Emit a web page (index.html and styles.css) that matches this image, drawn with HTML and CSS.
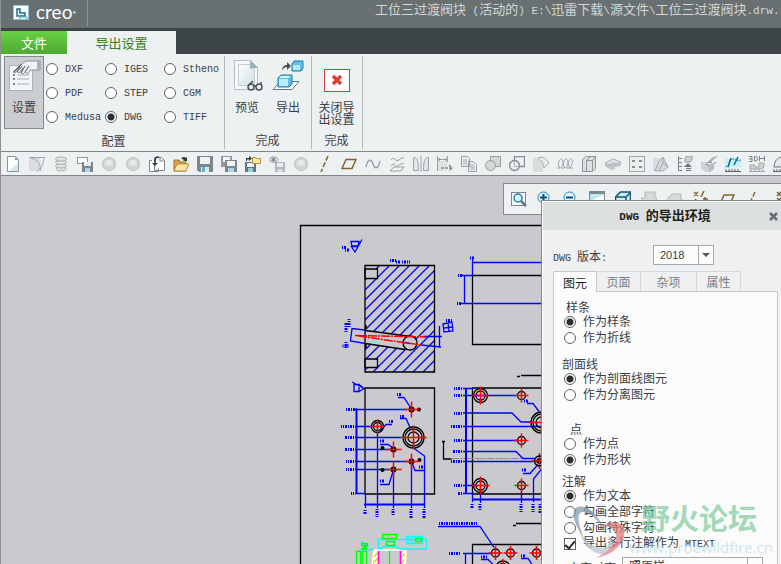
FILE: index.html
```html
<!DOCTYPE html>
<html lang="zh-CN">
<head>
    <meta charset="UTF-8">
    <meta name="viewport" content="width=device-width, initial-scale=1.0">
    <title>Creo</title>
    <link rel="stylesheet" href="styles.css">
</head>
<body>
<div class="app">
    <header class="titlebar">
        <div class="brand">
            <svg width="16" height="16" viewBox="0 0 16 16">
                <rect x="0.5" y="0.5" width="15" height="14" fill="#f4fbfd" stroke="#8fc3d6"/>
                <path d="M4 4h3v4h5v3H4z" fill="none" stroke="#1c6d8c" stroke-width="1.5"/>
                <path d="M7 14v-2h7v2" fill="none" stroke="#5fa9c4"/>
            </svg>
            <span class="brand-name">creo</span><span class="brand-mark">●</span>
        </div>
        <div class="window-title">工位三过渡阀块<span class="latin"> (</span>活动的<span class="latin">) E:\</span>迅雷下载<span class="latin">\</span>源文件<span class="latin">\</span>工位三过渡阀块<span class="latin">.drw.</span></div>
    </header>
    <nav class="ribbon-tabs">
        <button class="file-tab">文件</button>
        <button class="ribbon-tab">导出设置</button>
    </nav>
    <section class="ribbon">
        <div class="group group-config">
            <div class="group-body">
                <button class="tool tool-active">
                    <svg width="34" height="34" viewBox="0 0 34 34">
                        <rect x="2.5" y="7.5" width="23" height="25" fill="#f3f7f9" stroke="#a9b3b8"/>
                        <path d="M6 21h2M6 17h2M6 26h2" stroke="#7b858a" stroke-width="2"/>
                        <path d="M11 17h11M10 21h12M10 26h12" stroke="#a3adb2"/>
                        <path d="M6 14l7-7 6-4h14v9H23l-2 4-3-2-2 2-2-1 2-5-4 5-2-1 3-5-5 6z" fill="#eef2f4" stroke="#8a959a"/>
                        <path d="M7 14l8-8M10 14l5-6M14 15l4-7M18 14l4-6" stroke="#4d575c" fill="none"/>
                        <rect x="30" y="3" width="3" height="10" fill="#9fb4be"/>
                    </svg>
                    <span>设置</span>
                </button>
                <div class="formats">
                    <label><input type="radio" name="format">DXF</label>
                    <label><input type="radio" name="format">IGES</label>
                    <label><input type="radio" name="format">Stheno</label>
                    <label><input type="radio" name="format">PDF</label>
                    <label><input type="radio" name="format">STEP</label>
                    <label><input type="radio" name="format">CGM</label>
                    <label><input type="radio" name="format">Medusa</label>
                    <label><input type="radio" name="format" checked>DWG</label>
                    <label><input type="radio" name="format">TIFF</label>
                </div>
            </div>
            <div class="group-name">配置</div>
        </div>
        <div class="group">
            <div class="group-body">
                <button class="tool">
                    <svg width="34" height="34" viewBox="0 0 34 34">
                        <defs>
                            <linearGradient id="paper" x1="0" y1="0" x2="1" y2="1"><stop offset="0" stop-color="#fff"/><stop offset="1" stop-color="#cfdde3"/></linearGradient>
                        </defs>
                        <path d="M4.500 2.500h16l7 7v22h-23z" fill="#f7fafb" stroke="#b6c0c5"/>
                        <path d="M8.500 6.500h12v4h4v17h-16z" fill="url(#paper)" stroke="#c2ccd1"/>
                        <path d="M20.500 2.500v7h7z" fill="#8fb5c4" stroke="#a3b4bb"/>
                        <g fill="#e4eaed" stroke="#4a5358" stroke-width="1.500"><circle cx="21" cy="29" r="3"/><circle cx="29" cy="29" r="3"/><path d="M19 27l4-4M31 27v-3M24 28h2" fill="none"/></g>
                    </svg>
                    <span>预览</span>
                </button>
                <button class="tool">
                    <svg width="34" height="34" viewBox="0 0 34 34">
                        <path d="M2 31.500l7-8h19l-7 8z" fill="#fff" stroke="#69777d"/>
                        <path d="M7 20l3-3h11v9l-3 3H7z" fill="#62bfe2" stroke="#1680ad"/>
                        <path d="M8 21h9v7H8z" fill="#b5edfb"/>
                        <path d="M8 20l2-2h10l-3 2z" fill="#dcf7fd"/>
                        <path d="M21 6l2-3h9v7l-2 3h-9z" fill="#62bfe2" stroke="#1680ad"/>
                        <path d="M22 7h7v5h-7z" fill="#b5edfb"/>
                        <path d="M11 13c0-5 3-6 5-6V4l4 4-4 4V9c-2 0-4 1-5 4z" fill="#474f53"/>
                    </svg>
                    <span>导出</span>
                </button>
            </div>
            <div class="group-name">完成</div>
        </div>
        <div class="group">
            <div class="group-body">
                <button class="tool tool-close">
                    <svg width="34" height="34" viewBox="0 0 34 34">
                        <rect x="4.500" y="11.500" width="25" height="22" fill="#fff" stroke="#d33b3b"/>
                        <path d="M13 18l8 8M21 18l-8 8" stroke="#e23d3a" stroke-width="3.500"/>
                    </svg>
                    <span>关闭导<br>出设置</span>
                </button>
            </div>
            <div class="group-name">完成</div>
        </div>
    </section>
    <div class="toolbar">
        <button><svg viewBox="0 0 16 16"><path d="M2.500 0.500h8l3 3v12h-11z" fill="#fff" stroke="#8799a1"/><path d="M10 1v3h3z" fill="#6f99ab"/><path d="M4 15h9V7z" fill="#d5e6ec"/></svg></button>
        <button><svg viewBox="0 0 16 16"><path d="M0 1h10c2 5 2 10 1 14H0z" fill="#d9dddf"/><path d="M0 1.500h16M15 1c0 7-3 12-7 14M2 2c6 1 9 5 10 13" fill="none" stroke="#a3a8aa"/></svg></button>
        <button><svg viewBox="0 0 16 16"><g fill="#e2e5e6" stroke="#a9aeb0"><ellipse cx="8" cy="13" rx="5" ry="2"/><ellipse cx="8" cy="10" rx="5.500" ry="2"/><ellipse cx="8" cy="6.500" rx="5.500" ry="2"/><ellipse cx="8" cy="3" rx="5.500" ry="2"/></g></svg></button>
        <button><svg viewBox="0 0 16 16"><rect x="0.500" y="1.500" width="10" height="6" fill="#fff" stroke="#8d9699"/><path d="M5 6h11v10H5z" fill="#7d878b"/><path d="M7 6h7v4H7z" fill="#e9f0f2"/><path d="M8 12h5v4H8z" fill="#a6d7e8"/></svg></button>
        <button><svg viewBox="0 0 16 16"><circle cx="8" cy="8" r="6.500" fill="#d2d4d5" stroke="#bfc2c3"/><ellipse cx="8" cy="7" rx="4" ry="3" fill="#e6e8e8"/></svg></button>
        <button><svg viewBox="0 0 16 16"><circle cx="8" cy="8" r="6.500" fill="#d2d4d5" stroke="#bfc2c3"/><ellipse cx="8" cy="7" rx="4" ry="3" fill="#e6e8e8"/></svg></button>
        <button><svg viewBox="0 0 16 16"><path d="M3 4.500H0.500v11h9v-3M5.500 1.500h7l3 3v10h-10z" fill="#fff" stroke="#7d888d"/><path d="M11 2v3h4" fill="none" stroke="#7d888d"/><path d="M10 1.500C7 0 6 2 6 7" fill="none" stroke="#333b3f" stroke-width="1.500"/><path d="M3 7h6l-3 3z" fill="#333b3f"/></svg></button>
        <button><svg viewBox="0 0 16 16"><path d="M1 15V4h5l1 2h6v9z" fill="#d6a64c" stroke="#9d7428"/><path d="M1 15l3-7h12l-3 7z" fill="#ffe6a8" stroke="#b98c39"/><path d="M8 3c2-3 4-2 5-1l1-1v4h-4l1-1c-1-1-2-1-3-1z" fill="#333b3f"/></svg></button>
        <button><svg viewBox="0 0 16 16"><path d="M0 0h16v16H2l-2-2z" fill="#7d878b"/><path d="M3 1h10v7H3z" fill="#eef2f4"/><path d="M4 11h8v5H4z" fill="#d5edf5"/><path d="M5 11h3v5H5z" fill="#67b3d0"/></svg></button>
        <button><svg viewBox="0 0 16 16"><path d="M0 0h11v11H0z" fill="#929b9f"/><path d="M2 1h7v5H2z" fill="#f3f6f7"/><path d="M4 4h12v12H4z" fill="#7d878b"/><path d="M6 5h8v5H6z" fill="#eef2f4"/><path d="M7 12h6v4H7z" fill="#a6d7e8"/></svg></button>
        <button><svg viewBox="0 0 16 16"><path d="M0 6h11v10H0z" fill="#68747a"/><path d="M2 7h7v4H2z" fill="#eef2f4"/><path d="M3 12h5v4H3z" fill="#8ccbe1"/><path d="M7.500 1.500h3l1 1h4v5h-8z" fill="#ffe6a8" stroke="#b98c39"/><path d="M1 5V2h3V0l3 2.500L4 5V3.500H2V5z" fill="#333b3f"/></svg></button>
        <button><svg viewBox="0 0 16 16"><path d="M6 6h10v10H6z" fill="#b3b8ba"/><path d="M8 7h6v4H8z" fill="#e8eaeb"/><path d="M9 13h4v3H9z" fill="#dde1e2"/><path d="M0 3.500C2 0 7 0 9 3.500 7 7 2 7 0 3.500z" fill="#eee" stroke="#8a9193"/><circle cx="4.500" cy="3.500" r="2" fill="#8a9193"/></svg></button>
        <button><svg viewBox="0 0 16 16"><circle cx="8" cy="8" r="6.500" fill="#d2d4d5" stroke="#bfc2c3"/><ellipse cx="8" cy="7" rx="4" ry="3" fill="#e6e8e8"/></svg></button>
        <button><svg viewBox="0 0 16 16"><path d="M11 0L4 16" stroke="#80652c" stroke-width="1.500" stroke-dasharray="5 2"/></svg></button>
        <button><svg viewBox="0 0 16 16"><path d="M1 12.500L5 3.500h10l-4 9z" fill="none" stroke="#80652c" stroke-width="1.500"/></svg></button>
        <button><svg viewBox="0 0 16 16"><path d="M1 11C3 1 7 4 8 8s5 7 7-3" fill="none" stroke="#9aa0a2" stroke-width="1.300"/></svg></button>
        <button><svg viewBox="0 0 16 16"><path d="M2 4c3-5 5 3 8 0s4-2 5-2M2 10c3-5 5 2 7 0s4-3 6-2M1 15l4-4h10l-3 4z" fill="none" stroke="#9aa0a2"/></svg></button>
        <button><svg viewBox="0 0 16 16"><path d="M0.500 1.500c4 0 5 4 5 13h-5zM15.500 1.500c-4 0-5 4-5 13h5z" fill="#e3e6e7" stroke="#9da3a5"/><path d="M8 0v16" stroke="#9da3a5"/></svg></button>
        <button><svg viewBox="0 0 16 16"><path d="M0 5h10v10H0z" fill="#dfe2e3"/><path d="M0.500 0v15M10.500 0v6M1 3.500h9M3 2L1 3.500 3 5M8 2l2 1.500L8 5" fill="none" stroke="#999fa1"/><path d="M4 12h10M12 9l3 3-3 3" fill="none" stroke="#888e90" stroke-width="1.500" stroke-dasharray="3 1"/></svg></button>
        <button><svg viewBox="0 0 16 16"><path d="M0.500 0.500h6l2 2v8h-8zM7.500 5.500h5l3 3v7h-8z" fill="#eceeef" stroke="#999fa1"/><path d="M2 4h4M2 6h4M2 8h4M9 9h4M9 11h5M9 13h5" stroke="#a5aaac"/></svg></button>
        <button><svg viewBox="0 0 16 16"><path d="M5.500 0.500h10v10h-10z" fill="#d5d8d9" stroke="#979d9f"/><circle cx="5.500" cy="9.500" r="5" fill="#d5d8d9" stroke="#979d9f"/></svg></button>
        <button><svg viewBox="0 0 16 16"><path d="M5.500 0.500h10v10h-10z" fill="none" stroke="#858b8e" stroke-width="1.300"/><circle cx="5.500" cy="9.500" r="5" fill="#e8ebec" stroke="#858b8e" stroke-width="1.300"/><path d="M5.500 5v5.500H10" fill="none" stroke="#b5babc"/></svg></button>
        <button><svg viewBox="0 0 16 16"><path d="M0 2h6c5 0 4 5 4 14H0z" fill="#d9dcdd"/><path d="M5 2c4-2 8 0 11 5l-5 5c-1-5-2-7-6-10z" fill="#e7e9ea" stroke="#a5aaac"/></svg></button>
        <button><svg viewBox="0 0 16 16"><path d="M0 12h3c-3-4-1-9 1-9s3 5 0 9h4c-3-4-1-9 1-9s3 5 0 9h4c-3-4-1-9 1-9s2 5-1 9h3" fill="none" stroke="#a0a6a8"/></svg></button>
        <button><svg viewBox="0 0 16 16"><path d="M1.500 3.500l4-3h9v12l-3 3h-10z" fill="#dde0e1" stroke="#8e9496"/><path d="M5.500 15V4.500l4-4M5.500 4.500h6v10M11.500 4.500l3-4" fill="none" stroke="#8e9496"/></svg></button>
        <button><svg viewBox="0 0 16 16"><path d="M0 7l8-4 8 3v4l-6 1v2l-4 1-6-4z" fill="#c0c4c6"/><path d="M0 7l8-4 8 3-5 2-3-1-3 2z" fill="#dfe1e2" stroke="#b0b5b7"/></svg></button>
        <button><svg viewBox="0 0 16 16"><rect x="0.500" y="0.500" width="15" height="15" fill="#eceeef" stroke="#a3a8aa"/><path d="M3 4h3v2H3zM10 4h3v2h-3zM3 10h3v2H3zM10 10h3v2h-3z" fill="#8a9092"/></svg></button>
        <button><svg viewBox="0 0 16 16"><path d="M0 2h7v13H0z" fill="#dadddf"/><path d="M6 5l4-4 5 10-5 4H2zM10 1v6l-4 8M10 7l5 4" fill="#d5d8d9" stroke="#a3a8aa"/></svg></button>
        <button><svg viewBox="0 0 16 16"><path d="M1.500 0v15M1 2.500h4M1 6.500h4M1 10.500h4M1 14.500h4" stroke="#7c8285" fill="none"/><path d="M8 2l2-2h5v4l-2 2H8z" fill="#ccd0d1" stroke="#979d9f"/><path d="M11 7l4 4H7zM9 12h5v1H9zM9 14h5v1H9z" fill="#6d7477"/></svg></button>
        <button><svg viewBox="0 0 16 16"><path d="M0 6h6l4 3v7H4l-4-4z" fill="#d0d3d5"/><path d="M5 8l4 3 6-5M8 7l8-7M8 6l3 1M6 7l7-6" fill="none" stroke="#858b8e"/><path d="M8 9l5-2v6l-5 3z" fill="#b7bbbd"/></svg></button>
        <button><svg viewBox="0 0 16 16"><path d="M0 1c5 5 10-2 16 2v9c-6-4-9 1-16 0z" fill="#c3eefa"/><path d="M0 10c5 4 3-8 8-7s4 3 8 1" fill="none" stroke="#3ba9d0"/><path d="M3 11L6 2M9 9l4-8" stroke="#176387" stroke-width="1.500"/><path d="M0 15.500h16M1 13v2M4 13v2M7 13v2M10 13v2M13 13v2" stroke="#59656b"/></svg></button>
        <button><svg viewBox="0 0 16 16"><path d="M0 0.500h3v5H0M0 3h3M5.500 0v5h2l1-2-1-3zM10 2.500h6M10.500 0v5M15.500 0v5" fill="none" stroke="#7c8285"/><path d="M1 9h5v2h4V7h5v4l-3 2H1z" fill="#cfd2d3" stroke="#a0a5a7"/><path d="M0 15.500h16M2 13v2M6 13v2M10 13v2M14 13v2" stroke="#9da3a5"/></svg></button>
        <button><svg viewBox="0 0 16 16"><path d="M1 10c1-6 4-8 7-9h8v10H1z" fill="#e6e9ea" stroke="#6d777b"/><path d="M0 15.500h16M1 13v2M4 13v2M7 13v2" stroke="#59656b"/></svg></button>
    </div>
    <main class="canvas">
        <svg class="drawing" width="780" height="388" viewBox="1 176 780 388">
            <defs>
                <clipPath id="section"><path d="M365 265.500h69.500V372H365z"/></clipPath>
                <pattern id="hatch-part" width="4" height="4" patternUnits="userSpaceOnUse" patternTransform="rotate(-45)">
                    <rect width="4" height="4" fill="#fff"/><path d="M0 2h4" stroke="#e5dc28" stroke-width="2"/>
                </pattern>
                <g id="hole-s"><circle r="3"/><path class="axis" d="M-8 0H8M0-8V8"/></g>
                <g id="hole-m"><circle class="ring" r="4"/><path class="axis" d="M-7 0H7M0-7V7"/></g>
                <g id="hole-l"><circle class="ring" r="7"/><circle class="ring" r="4.500"/><path class="axis" d="M-9 0H9M0-9V9"/></g>
                <g id="hole-xl"><circle class="ring" r="10.500"/><circle class="ring" r="8.500"/><circle class="ring" r="5.500"/><path class="axis" d="M-13 0H13M0-12V12"/></g>
            </defs>
            <!-- sheet frame -->
            <path class="edge" d="M782 225.500H300.500V566"/>
            <!-- section view -->
            <path class="dim" clip-path="url(#section)" d="M365 280l70-70M365 290l70-70M365 300l70-70M365 310l70-70M365 320l70-70M365 330l70-70M365 340l70-70M365 350l70-70M365 360l70-70M365 370l70-70M365 380l70-70M365 390l70-70M365 400l70-70M365 410l70-70M365 420l70-70M365 430l70-70M365 440l70-70"/>
            <path d="M365.500 330.500L411 336.500 405 349.500 365.500 343.500z" fill="#cac9cd"/>
            <path d="M365 269h12.500v9.500H365zM365 359h12.500v8.500H365z" fill="#cac9cd" class="edge"/>
            <circle cx="410" cy="343" r="7" fill="#cac9cd" class="edge"/>
            <path class="edge" d="M365 265.500h69.500V372H365zM365.500 330.500L411 336.500M365.500 343.500L405 349.500M366 325v4M366 344v4"/>
            <path class="dim" d="M365 330l-13-1.500-1.500 12.500 15 2.500M421 345l20 2M423 336.500h19M439.500 326v22M402 342l8 1.500"/>
            <path class="axis" stroke-dasharray="9 1 2 1" d="M355 335.500l71 1.500M358 336l63 9"/>
            <path class="dim" d="M443 324l9-2 1 9-9 1zM448 323l1 8M444 328l8-1M351 241.500h8l-1 5h-6zM351 246l4 6 7-12.500M352 246h6"/>
            <path class="note" d="M342 247.500h4M345 250h5M390 260.500h6M396 262h4M402 262h8M446 320.500h6M342.500 346h6M346 348v-6M346 332v-10M349 327v-8"/>
            <!-- upper right view -->
            <path class="edge" d="M542 275.500h-69.500v69H542M521 375.500h21M517 376.500h3"/>
            <path class="dim" d="M542 262.500h-69.500M472.500 259v16M460 275.500h12M464.500 275v29M460 303.500h82"/>
            <path class="note" d="M470 258h4M458 275.500h4M457 303.500h4"/>
            <!-- lower left view -->
            <path class="dim" d="M352 382l13 7M354 384.500v7h5v-7zM359 384.500l5 4-5 3"/>
            <path class="edge" d="M365 388h69.500v106H365z"/>
            <path class="dim" d="M355 409.500h52M355 426.500h17M355 437.500h46M355 449.500h36M355 461.500h53M355 469.500h36M355 493.500h10"/>
            <path class="dim dim-bold" d="M356.500 409v85M364 504.500h60"/>
            <path class="dim" d="M365.500 494v14M377.500 431v77M393.500 473v35M411.500 465v43M424.500 508v-52l-11-8M398 397.500h6l7 11M400 418.500h6l4 9M392 424.500h-6l-6 7M380 444.500h8l6 4M380 484.500h9l4-13M424 470.500h-9l-3-8"/>
            <path class="note" d="M357 409.500h-11M354 426.500h-13M354 437.500h-10M354 449.500h-10M354 461.500h-8M354 469.500h-8M351 493.500h3M397 394.500h5M400 416.500h4M389 421.500h4M380 441h5M380 481h4M419 467h5M365 510v4M377 509v8M393 509v7M411 509v9M424 509v9"/>
            <circle cx="419" cy="409.500" r="2"/><circle cx="382.500" cy="448" r="2"/><circle cx="419.500" cy="460" r="2"/><circle cx="382.500" cy="470" r="2"/>
            <use href="#hole-s" x="411.500" y="409.500"/><use href="#hole-s" x="393.500" y="449.500"/><use href="#hole-s" x="411.500" y="461.500"/><use href="#hole-s" x="393.500" y="469.500"/>
            <circle class="ring" cx="377.500" cy="426.500" r="6"/>
            <use href="#hole-m" x="377.500" y="426.500"/><use href="#hole-xl" x="413.500" y="437.500"/>
            <!-- lower right view -->
            <path class="edge" d="M542 388h-69.500v106H542M443.500 441v18h8M442 441.500h3"/>
            <path d="M451 458.500h71" stroke="#8c8c96" stroke-dasharray="8 1 2 1"/>
            <path class="dim dim-bold" d="M466 388v106M472 499.500h70"/>
            <path class="dim" d="M463 388.500h10M463 395.500h55M463 413h49l9 9h10M463 426.500h79M463 440.500h55M463 451.500h53l7 7h12M463 461.500h79M463 485.500h13M463 493.500h10M472.500 494v8M480.500 490v13M521.500 490v13M533.500 502v-23l8-10M527 403.500h6l6 8M523 473.500h7l8-9"/>
            <path class="note" d="M462 388.500h-8M462 395.500h-8M462 413.500h-8M462 426.500h-12M462 440.500h-8M462 451.500h-9M462 461.500h-11M462 485.500h-8M462 493.500h-4M524 401h4M522 470h5M472 504v4M480 504v7M521 504v8M533 504v8M540 504v10"/>
            <use href="#hole-l" x="480.500" y="395.500"/><use href="#hole-m" x="521.500" y="395.500"/><use href="#hole-m" x="521.500" y="440.500"/><use href="#hole-l" x="480.500" y="485.500"/><use href="#hole-m" x="521.500" y="485.500"/>
            <use href="#hole-xl" x="541.500" y="422.500"/><use href="#hole-s" x="539.500" y="461"/><circle class="ring" cx="539.500" cy="461" r="5"/>
            <!-- bottom view -->
            <path class="edge" d="M542 544.500h-69.500V566M516 523.500h26M513 525.500h3"/>
            <path class="dim" d="M438 526.500h42l14 21M463 553.500h28M465.500 553v12M481 559.500h7l6 6M521 558.500h7l4 6"/>
            <path class="note" d="M439 523.500h38M449 553.500h11M481 557h6M521 556h5"/>
            <use href="#hole-m" x="495.500" y="553"/><use href="#hole-m" x="510.500" y="553"/><use href="#hole-m" x="536.500" y="553"/><use href="#hole-l" x="503" y="568"/>
            <!-- coloured part -->
            <path d="M373.500 550h5v15h-5zM400.500 550h5v15h-5z" fill="url(#hatch-part)"/>
            <path d="M372 566l2-16h32l-1 16" fill="none" stroke="#fff" stroke-width="1.500"/>
            <path d="M378.500 551v15M400.500 551v15" stroke="#ff00ff" stroke-width="1.500"/>
            <path class="cyan" d="M378.500 549v-9.500h48V549M359 549.500h15M379 549c6-4 15-4 21 0h27M406.500 536.500h16v7h-16zM412 543v-7M408 542l3-4M361 541l6 6"/>
            <path class="green" d="M389.500 551v14M382.500 534.500h14v4h-14zM386.500 541.500h8v4h-8zM415.500 538.500h6v3h-6zM361.500 543.500h6v2h-6zM362 549l2.500-3 2.500 3zM356.500 551.500h4V566h-4zM362.500 551.500h4V566h-4z"/>
        </svg>
        <div class="view-bar">
            <button><svg viewBox="0 0 16 16"><rect x="0.500" y="1.500" width="14" height="13" fill="#f7fafb" stroke="#7c888d"/><circle cx="7" cy="7" r="4" fill="#d8f2fa" stroke="#2781a5" stroke-width="1.500"/><path d="M10 10l5 5" stroke="#6a757a" stroke-width="2.500"/></svg></button>
            <button><svg viewBox="0 0 16 16"><circle cx="6.500" cy="6.500" r="5.500" fill="#e2f5fb" stroke="#2781a5"/><path d="M3 6.500h7M6.500 3v7" stroke="#0b4f78" stroke-width="2"/><path d="M11 11l4 4" stroke="#6a757a" stroke-width="2.500"/></svg></button>
            <button><svg viewBox="0 0 16 16"><circle cx="6.500" cy="6.500" r="5.500" fill="#e2f5fb" stroke="#2781a5"/><path d="M3 6.500h7" stroke="#0b4f78" stroke-width="2"/><path d="M11 11l4 4" stroke="#6a757a" stroke-width="2.500"/></svg></button>
            <button><svg viewBox="0 0 16 16"><rect x="0.500" y="0.500" width="15" height="14" fill="#bfe6f3" stroke="#7c888d"/><path d="M0 0h16v3H0z" fill="#7c888d"/><path d="M2 10l5-3 8-3v10H2z" fill="#fff"/></svg></button>
            <button><svg viewBox="0 0 16 16"><path d="M0.500 6l5-5h10v9l-5 5h-10z" fill="#c6effa" stroke="#14536d" stroke-width="1.500"/><path d="M0 6h11v9M11 6l5-5" fill="none" stroke="#14536d" stroke-width="1.500"/></svg></button>
            <button><svg viewBox="0 0 16 16"><path d="M4 1h10v6h2v8H0V7h4z" fill="#d6dadb" stroke="#b4babc"/></svg></button>
            <button><svg viewBox="0 0 16 16"><path d="M5 3h9v6h2v6H0V8z" fill="#d6dadb" stroke="#b4babc"/></svg></button>
            <button><svg viewBox="0 0 16 16"><path d="M1 1l4 4M5 1L1 5M11 0L8 6M3 8l-2 4M12 6v4M10 8h5" stroke="#80652c" stroke-width="1.500"/></svg></button>
            <button><svg viewBox="0 0 16 16"><path d="M1 13l4-9h10l-4 9z" fill="none" stroke="#80652c" stroke-width="1.500"/></svg></button>
            <button><svg viewBox="0 0 16 16"><path d="M10 1L3 16" stroke="#80652c" stroke-width="1.500" stroke-dasharray="5 2"/></svg></button>
            <button><svg viewBox="0 0 16 16"><path d="M6 1l4 4M10 1L6 5M6 7l4 4M10 7l-4 4" stroke="#80652c" stroke-width="1.500"/></svg></button>
        </div>
    </main>
    <div class="dialog" role="dialog" aria-labelledby="dialog-title">
        <div class="dialog-head">
            <h1 id="dialog-title"><span class="latin">DWG </span>的导出环境</h1>
            <button class="dialog-close" aria-label="关闭"><svg width="9" height="9" viewBox="0 0 9 9"><path d="M1 1l7 7M8 1L1 8" stroke="#666c6f" stroke-width="2.500"/></svg></button>
        </div>
        <div class="version">
            <label for="version"><span class="latin">DWG </span>版本<span class="latin">:</span></label>
            <div class="select-box">
                <select id="version"><option>2018</option></select>
            </div>
        </div>
        <div class="tabs">
            <button class="tab tab-active">图元</button>
            <button class="tab">页面</button>
            <button class="tab tab-wide">杂项</button>
            <button class="tab">属性</button>
        </div>
        <form class="panel">
            <fieldset>
                <legend class="inset">样条</legend>
                <label><input type="radio" name="spline" checked>作为样条</label>
                <label><input type="radio" name="spline">作为折线</label>
            </fieldset>
            <fieldset>
                <legend>剖面线</legend>
                <label><input type="radio" name="xhatch" checked>作为剖面线图元</label>
                <label><input type="radio" name="xhatch">作为分离图元</label>
            </fieldset>
            <fieldset class="fieldset-point">
                <legend class="inset-deep">点</legend>
                <label><input type="radio" name="point">作为点</label>
                <label><input type="radio" name="point" checked>作为形状</label>
            </fieldset>
            <fieldset>
                <legend>注解</legend>
                <label><input type="radio" name="note" checked>作为文本</label>
                <label><input type="radio" name="note">勾画全部字符</label>
                <label><input type="radio" name="note">勾画特殊字符</label>
                <label><input type="checkbox" checked><span>导出多行注解作为<span class="latin"> MTEXT</span></span></label>
            </fieldset>
            <div class="align-row">
                <label for="align">文字对齐</label>
                <div class="select-box select-wide">
                    <select id="align"><option>照原样</option></select>
                </div>
            </div>
        </form>
    </div>
    <div class="watermark">
        <svg width="60" height="60" viewBox="0 0 60 60">
            <path d="M34 27C26 8 11 3 6 9c-4 5 0 17 9 29C8 22 8 13 13 12c6-1 13 5 21 15z" fill="#7f95ab"/>
            <path d="M10 30c4 10 14 18 24 18 7-2 8-8 4-14 8 8 8 18-1 20C26 56 14 46 10 30z" fill="#b9c3cf"/>
            <path d="M33 26c9-6 20-5 22 4 2 11-8 24-28 28 14-7 22-16 20-24-1-6-7-8-14-8z" fill="#e2777a"/>
        </svg>
        <div class="watermark-text">
            <span class="watermark-name">野火论坛</span>
            <span class="watermark-url">www.proewildfire.cn</span>
        </div>
    </div>
</div>
</body>
</html>
```
FILE: styles.css
```css
* {
    box-sizing: border-box;
}
body {
    margin: 0;
    font-family: "Liberation Sans", "Noto Sans CJK SC", sans-serif;
    font-size: 12px;
    color: #3c4043;
    background-color: #cac9cd;
}
button {
    padding: 0;
    border: none;
    background: none;
    font: inherit;
    color: inherit;
}
svg {
    display: block;
}
.app {
    position: relative;
    display: flex;
    flex-direction: column;
    height: 100vh;
    overflow: hidden;
    border-left: 1px solid #8e9293;
}
.latin {
    font-family: "Liberation Mono", monospace;
    font-size: 10px;
    white-space: pre;
}

/* title bar and ribbon tabs */
.titlebar {
    display: flex;
    height: 28px;
    flex: none;
    background-color: #687071;
    color: #d3d7d7;
}
.brand {
    display: flex;
    align-items: center;
    width: 87px;
    height: 26px;
    padding-left: 12px;
    border-right: 1px solid #8f9697;
}
.brand-name {
    margin-left: 7px;
    padding-bottom: 2px;
    font-family: Lato, sans-serif;
    font-size: 19px;
    line-height: 20px;
    color: #fff;
}
.brand-mark {
    align-self: flex-start;
    margin-top: 8px;
    font-size: 6px;
    line-height: 8px;
}
.window-title {
    flex: 1;
    padding-left: 287px;
    overflow: hidden;
    white-space: nowrap;
    font-size: 13px;
    line-height: 20px;
}
.window-title .latin {
    font-size: 11px;
}
.ribbon-tabs {
    display: flex;
    flex: none;
    height: 26px;
    padding-top: 3px;
    background-color: #3d4546;
    font-size: 13px;
}
.file-tab {
    width: 66px;
    background: linear-gradient(#68d243, #4fa833);
    color: #fff;
}
.ribbon-tab {
    width: 109px;
    background-color: #edf1f2;
    color: #3a7d1c;
}

/* ribbon */
.ribbon {
    display: flex;
    flex: none;
    height: 97px;
    padding: 2px 0;
    background-color: #edf1f2;
}
.group {
    display: flex;
    flex-direction: column;
    padding: 0 3px 0 2px;
    border-right: 1px solid #b3b8ba;
}
.group-config {
    padding: 0 1px 0 3px;
}
.group-body {
    display: flex;
    gap: 1px;
    height: 73px;
}
.group-name {
    padding-top: 5px;
    line-height: 16px;
    text-align: center;
}
.tool {
    display: flex;
    flex-direction: column;
    align-items: center;
    width: 40px;
    padding-top: 2px;
    line-height: 12px;
}
.tool span {
    margin-top: 10px;
    white-space: nowrap;
}
.tool-active {
    padding-top: 1px;
    border: 1px solid #86898c;
    background-color: #cccdd1;
}
.tool-close {
    width: 45px;
}
.formats {
    display: grid;
    grid-template-columns: repeat(3, 59px);
    align-content: start;
    margin-left: 1px;
    padding-top: 1px;
    font-family: "Liberation Mono", monospace;
    font-size: 10px;
}
.formats label {
    display: flex;
    align-items: center;
    gap: 7px;
    height: 24px;
}
input {
    appearance: none;
    flex: none;
    width: 12px;
    height: 12px;
    margin: 0;
    border: 1px solid #5f6366;
    background-color: #fff;
}
input[type="radio"] {
    border-radius: 50%;
}
input[type="radio"]:checked {
    background-image: radial-gradient(circle, #2b2d2f 3px, #fff 4px);
}
input[type="checkbox"] {
    display: flex;
    justify-content: center;
}
input[type="checkbox"]:checked::after {
    content: "";
    width: 4px;
    height: 8px;
    border: solid #2b2d2f;
    border-width: 0 2px 2px 0;
    transform: rotate(40deg);
}

/* quick access toolbar */
.toolbar {
    display: flex;
    flex: none;
    height: 25px;
    overflow: hidden;
    border-top: 1px solid #7f8788;
    border-bottom: 1px solid #7f8788;
    background-color: #edf1f2;
}
.toolbar button {
    display: flex;
    flex: none;
    align-items: center;
    justify-content: center;
    width: 24px;
}
.toolbar svg,
.view-bar svg {
    width: 16px;
    height: 16px;
}

/* drawing sheet */
.canvas {
    position: relative;
    flex: 1;
    min-height: 0;
    overflow: hidden;
}
.edge,
.ring {
    stroke: #000;
    stroke-width: 1.3px;
}
.edge:not([fill]),
.ring,
.axis,
.dim,
.note,
.cyan,
.green {
    fill: none;
}
.axis {
    stroke: #ff0000;
    stroke-width: 1.5px;
}
.dim {
    stroke: #0000ff;
    stroke-width: 1.3px;
}
.dim-bold {
    stroke-width: 2px;
}
.note {
    stroke: #0000ff;
    stroke-width: 3px;
    stroke-dasharray: 1 1 2 1;
}
.cyan {
    stroke: #00ffff;
    stroke-width: 1.3px;
}
.green {
    stroke: #00ff00;
    stroke-width: 1.3px;
}
.view-bar {
    position: absolute;
    top: 7px;
    right: 0;
    display: flex;
    width: 278px;
    height: 32px;
    padding-left: 2px;
    overflow: hidden;
    border: 1px solid #7f8b8b;
    border-right: none;
    background-color: #edf1f2;
}
.view-bar button {
    display: flex;
    flex: none;
    align-items: center;
    justify-content: center;
    width: 26px;
}

/* export dialog */
.dialog {
    position: absolute;
    top: 200px;
    right: 0;
    bottom: 0;
    width: 240px;
    overflow: hidden;
    border: 1px solid #85898c;
    border-width: 1px 0 0 1px;
    box-shadow: inset 1px 1px #fff;
    background-color: #eff0f2;
}
.dialog-head {
    display: flex;
    align-items: center;
    height: 28px;
    margin: 1px 0 0 1px;
    padding-right: 3px;
    background-color: #dbdfdf;
}
.dialog-head h1 {
    flex: 1;
    margin: 0;
    padding-left: 18px;
    font-size: 13px;
    line-height: 20px;
    text-align: center;
    color: #1d1f20;
}
.dialog-head .latin {
    font-size: 11px;
}
.version {
    display: flex;
    align-items: center;
    height: 20px;
    margin: 15px 0 6px 11px;
}
.version label {
    width: 100px;
}
.select-box {
    position: relative;
    width: 61px;
    height: 20px;
}
.select-box::after {
    content: "";
    position: absolute;
    top: 8px;
    right: 4px;
    border: 4px solid transparent;
    border-top-color: #55595c;
    border-bottom: none;
}
select {
    appearance: none;
    width: 100%;
    height: 100%;
    padding: 0 6px;
    border: 1px solid #a5a9ac;
    border-radius: 0;
    background: linear-gradient(#a5a9ac, #a5a9ac) right 14px top / 1px 100% no-repeat #fbfbfc;
    font-family: inherit;
    font-size: 11px;
    color: #3c4043;
}
.select-wide {
    width: 141px;
}
.select-wide select {
    font-size: 12px;
}
.tabs {
    display: flex;
    height: 20px;
    margin-left: 11px;
}
.tab {
    width: 44px;
    border-top: 1px solid #d5d8da;
    border-right: 1px solid #d5d8da;
    color: #7a7e81;
}
.tab-wide {
    width: 56px;
}
.tab-active {
    position: relative;
    height: 21px;
    border: 1px solid #c3c8cb;
    border-bottom: none;
    border-radius: 2px 2px 0 0;
    background-color: #fbfbfc;
    color: #1d1f20;
}
.panel {
    margin: 0 3px 0 11px;
    padding: 10px 8px 40px;
    border: 1px solid #c3c8cb;
    background-color: #fbfbfc;
}
fieldset {
    margin: 0 0 13px;
    padding: 0 0 0 2px;
    border: none;
}
fieldset + .fieldset-point {
    margin: 21px 0 8px;
}
legend {
    height: 12px;
    margin-left: -2px;
    padding: 0;
    line-height: 12px;
}
.inset {
    margin-left: 2px;
}
.inset-deep {
    margin-left: 6px;
}
fieldset label {
    display: flex;
    align-items: center;
    gap: 7px;
    height: 16px;
    line-height: 16px;
}
.align-row {
    display: flex;
    align-items: center;
    gap: 6px;
    margin-top: -8px;
    padding-left: 6px;
    white-space: nowrap;
}

/* forum mark */
.watermark {
    position: absolute;
    right: 8px;
    bottom: 4px;
    display: flex;
    align-items: flex-end;
    opacity: 0.7;
    pointer-events: none;
}
.watermark-text {
    display: flex;
    flex-direction: column;
    align-items: flex-end;
}
.watermark-name {
    padding-right: 16px;
    font-family: "Noto Sans CJK SC", sans-serif;
    font-size: 29px;
    font-weight: bold;
    line-height: 34px;
    color: #7fcb9b;
}
.watermark-url {
    font-family: "Open Sans", sans-serif;
    font-size: 15px;
    line-height: 26px;
    color: #b9dde6;
}
```
